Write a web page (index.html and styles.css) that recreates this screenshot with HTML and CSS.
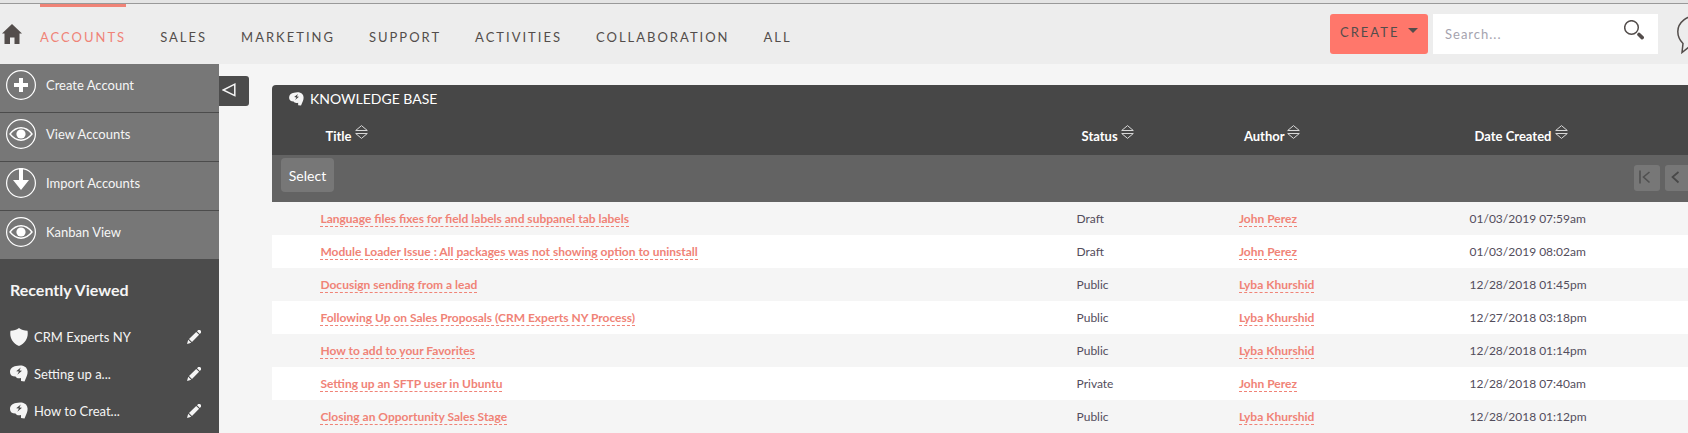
FILE: index.html
```html
<!DOCTYPE html>
<html lang="en">
<head>
<meta charset="UTF-8">
<title>Knowledge Base</title>
<link rel="stylesheet" href="styles.css">
</head>

<body>

<!-- shared icons -->
<svg class="sprite" aria-hidden="true">
 <symbol id="i-eye" viewBox="0 0 32 32">
  <circle cx="16" cy="16" r="14.4" fill="none" stroke="#fff" stroke-width="1.2"/>
  <path d="M5 16Q10 9.8 16 9.8T27 16Q22 22.2 16 22.2T5 16Z" fill="none" stroke="#fff" stroke-width="1.4"/>
  <circle cx="16" cy="16" r="4.6" fill="#fff"/>
 </symbol>
 <symbol id="i-brain" viewBox="0 0 18 17">
  <path d="M6 1C9 0 14 0 16 2.500C18 5 18 8 16.800 11L14.500 16.500L11 16V13C8 14 6 12.500 5.500 11.500C2 11.500 0 10 0 7C0 3.500 2.500 1.500 6 1Z" fill="#f5f5f5"/>
  <path d="M10.800 2.500L6.200 6.200L9 6.600L7.300 9.800L12 5.800L9.400 5.500Z" fill="#444"/>
 </symbol>
 <symbol id="i-pencil" viewBox="0 0 14 14">
  <path d="M0 14L1.200 9.800L4.200 12.700ZM2 9L9.200 1.900L12.100 4.700L5 12ZM10 1.200L11.200 0H13L14 1V2.700L12.800 3.900Z" fill="#f5f5f5"/>
 </symbol>
 <symbol id="i-sort" viewBox="0 0 13 14">
  <path d="M6.500 .6L12.300 5.500H.7ZM.7 8.500H12.300L6.500 13.400Z" fill="none" stroke="#d8d8d8" stroke-width="1"/>
 </symbol>
</svg>

<header class="topbar">
 <nav class="menu">
  <a class="home" href="#" aria-label="Home">
   <svg width="20" height="20" viewBox="0 0 20 20"><path d="M10 0L20 9.500H17.500V20H12.500V13.500H8V20H2.500V9.500H0Z" fill="#534d4b"/></svg>
  </a>
  <a class="active" href="#">ACCOUNTS</a>
  <a href="#">SALES</a>
  <a href="#">MARKETING</a>
  <a href="#">SUPPORT</a>
  <a href="#">ACTIVITIES</a>
  <a href="#">COLLABORATION</a>
  <a href="#">ALL</a>
 </nav>

 <div class="tools">
  <button class="create">CREATE <span class="caret"></span></button>
  <form class="search">
   <input type="text" placeholder="Search..." aria-label="Search">
   <button type="button" aria-label="Search">
    <svg width="20" height="20" viewBox="0 0 20 20"><circle cx="7.500" cy="7.500" r="6.800" fill="none" stroke="#534d4b" stroke-width="1.500"/><path d="M15 14.500L18.200 17.600" stroke="#534d4b" stroke-width="3.600" stroke-linecap="round"/></svg>
   </button>
  </form>
  <button class="chat" aria-label="Notifications">
   <svg width="44" height="40" viewBox="0 0 44 40"><path d="M6 29.500C2.500 26 .8 22 .8 17.500C.8 8.500 10 1 22 1S43 8.500 43 17.500S34 34 22 34C18.500 34 15.500 33.500 12.500 32.500L5 38.500Z" fill="none" stroke="#534d4b" stroke-width="1.500"/></svg>
  </button>
 </div>
</header>

<div class="page">
 <aside class="sidebar">
  <ul class="actions">
   <li><a href="#"><svg width="32" height="32" viewBox="0 0 32 32"><circle cx="16" cy="16" r="14.400" fill="none" stroke="#fff" stroke-width="1.200"/><path d="M16 9V23M9 16H23" stroke="#fff" stroke-width="4"/></svg>Create Account</a></li>
   <li><a href="#"><svg width="32" height="32"><use href="#i-eye"/></svg>View Accounts</a></li>
   <li><a href="#"><svg width="32" height="32" viewBox="0 0 32 32"><circle cx="16" cy="16" r="14.400" fill="none" stroke="#fff" stroke-width="1.200"/><path d="M14 1H18V13H24L16 23L8 13H14Z" fill="#fff"/></svg>Import Accounts</a></li>
   <li><a href="#"><svg width="32" height="32"><use href="#i-eye"/></svg>Kanban View</a></li>
  </ul>

  <h2>Recently Viewed</h2>
  <ul class="recent">
   <li>
    <a href="#"><svg width="18" height="18" viewBox="0 0 18 18"><path d="M9 0C11.500 1.800 14 2.600 17.500 2.800C18.600 9 16 15 9 18C2 15-.6 9 .5 2.800C4 2.600 6.500 1.800 9 0Z" fill="#f5f5f5"/></svg>CRM Experts NY</a>
    <a href="#" aria-label="Edit"><svg width="14" height="14"><use href="#i-pencil"/></svg></a>
   </li>
   <li>
    <a href="#"><svg width="18" height="17"><use href="#i-brain"/></svg>Setting up a...</a>
    <a href="#" aria-label="Edit"><svg width="14" height="14"><use href="#i-pencil"/></svg></a>
   </li>
   <li>
    <a href="#"><svg width="18" height="17"><use href="#i-brain"/></svg>How to Creat...</a>
    <a href="#" aria-label="Edit"><svg width="14" height="14"><use href="#i-pencil"/></svg></a>
   </li>
  </ul>
 </aside>

 <button class="toggle" aria-label="Collapse sidebar">
  <svg width="14" height="14" viewBox="0 0 14 14"><path d="M12.800 1.200V12.600L1.200 7Z" fill="none" stroke="#f5f5f5" stroke-width="1.500"/></svg>
 </button>

 <main class="panel">
  <h1><svg width="15" height="14" viewBox="0 0 18 17"><use href="#i-brain"/></svg>KNOWLEDGE BASE</h1>

  <table>
   <colgroup>
    <col class="c-check"><col class="c-title"><col class="c-status"><col class="c-author"><col>
   </colgroup>
   <thead>
    <tr>
     <th></th>
     <th>Title <svg width="13" height="14"><use href="#i-sort"/></svg></th>
     <th>Status <svg width="13" height="14"><use href="#i-sort"/></svg></th>
     <th>Author <svg width="13" height="14"><use href="#i-sort"/></svg></th>
     <th>Date Created <svg width="13" height="14"><use href="#i-sort"/></svg></th>
    </tr>
    <tr class="bar">
     <td colspan="5">
      <div class="bar-in">
       <button class="select">Select</button>
       <div class="pages">
        <button disabled aria-label="First page"><svg width="12" height="14" viewBox="0 0 12 14"><path d="M1 .5V13.500M10.500 2L4.500 7L10.500 12.500" fill="none" stroke="#505050" stroke-width="1.600"/></svg></button>
        <button disabled aria-label="Previous page"><svg width="12" height="14" viewBox="0 0 12 14"><path d="M8.500 2L2.500 7L8.500 12.500" fill="none" stroke="#484848" stroke-width="1.700"/></svg></button>
       </div>
      </div>
     </td>
    </tr>
   </thead>
   <tbody>
    <tr><td></td><td><a href="#">Language files fixes for field labels and subpanel tab labels</a></td><td>Draft</td><td><a href="#">John Perez</a></td><td>01/03/2019 07:59am</td></tr>
    <tr><td></td><td><a href="#">Module Loader Issue : All packages was not showing option to uninstall</a></td><td>Draft</td><td><a href="#">John Perez</a></td><td>01/03/2019 08:02am</td></tr>
    <tr><td></td><td><a href="#">Docusign sending from a lead</a></td><td>Public</td><td><a href="#">Lyba Khurshid</a></td><td>12/28/2018 01:45pm</td></tr>
    <tr><td></td><td><a href="#">Following Up on Sales Proposals (CRM Experts NY Process)</a></td><td>Public</td><td><a href="#">Lyba Khurshid</a></td><td>12/27/2018 03:18pm</td></tr>
    <tr><td></td><td><a href="#">How to add to your Favorites</a></td><td>Public</td><td><a href="#">Lyba Khurshid</a></td><td>12/28/2018 01:14pm</td></tr>
    <tr><td></td><td><a href="#">Setting up an SFTP user in Ubuntu</a></td><td>Private</td><td><a href="#">John Perez</a></td><td>12/28/2018 07:40am</td></tr>
    <tr><td></td><td><a href="#">Closing an Opportunity Sales Stage</a></td><td>Public</td><td><a href="#">Lyba Khurshid</a></td><td>12/28/2018 01:12pm</td></tr>
   </tbody>
  </table>
 </main>
</div>

</body>
</html>
```
FILE: styles.css
```css
*{
 box-sizing:border-box;
}

body{
 margin:0;
 min-height:100vh;
 display:flex;
 flex-direction:column;
 background:#f5f5f5;
 color:#534d5c;
 font-family:Lato, sans-serif;
 font-size:13px;
 overflow:hidden;
}

a{
 color:inherit;
 text-decoration:none;
}

button{
 border:0;
 padding:0;
 font:inherit;
 cursor:pointer;
}

svg{
 display:block;
 flex-shrink:0;
}

ul{
 margin:0;
 padding:0;
 list-style:none;
}

.sprite{
 position:absolute;
 width:0;
 height:0;
}

/* TOP BAR */
.topbar{
 display:flex;
 justify-content:space-between;
 height:64px;
 background:linear-gradient(#e4e4e4 3px, #999 3px, #999 4px, #ededed 4px);
 padding-top:4px;
 color:#534d4b;
}

.menu{
 display:flex;
 gap:34px;
 letter-spacing:2px;
 line-height:20px;
}

.menu a{
 border-top:3px solid transparent;
 padding-top:20px;
}

.menu .active{
 color:#f08377;
 border-color:#f08377;
}

.menu .home{
 padding:17px 0 0 2px;
 margin-right:-16px;
}

.tools{
 display:flex;
 padding-top:10px;
 margin-right:-33px;
}

.create{
 display:flex;
 align-items:center;
 justify-content:space-between;
 width:98px;
 height:40px;
 padding:0 10px 4px;
 margin-right:5px;
 border-radius:3px;
 background:#ff776b;
 color:#534d4b;
 letter-spacing:2px;
}

.caret{
 border:5px solid transparent;
 border-top-color:#534d4b;
 border-bottom:0;
 margin-bottom:4px;
}

.search{
 display:flex;
 align-items:center;
 width:225px;
 height:40px;
 margin-right:19px;
 padding:0 14px 0 12px;
 background:#fff;
}

.search input{
 flex:1;
 min-width:0;
 border:0;
 padding:0;
 outline:0;
 font:inherit;
 letter-spacing:1px;
}

.search input::placeholder{
 color:#a5a3ae;
}

.search button{
 background:none;
 padding-bottom:8px;
}

.chat{
 height:40px;
 background:none;
}

/* SIDEBAR */
.page{
 display:flex;
 align-items:flex-start;
 flex:1;
}

.sidebar{
 align-self:stretch;
 flex:0 0 219px;
 background:#4c4c4c;
 color:#f5f5f5;
}

.actions li{
 background:#777;
 border-bottom:1px solid #4c4c4c;
}

.actions li:last-child{
 border-bottom:0;
}

.actions a{
 display:flex;
 align-items:center;
 gap:9px;
 height:48px;
 padding:0 5px 6px;
}

.sidebar h2{
 margin:0;
 padding:21px 10px 18px;
 font-size:16px;
 line-height:20px;
}

.recent li{
 display:flex;
 align-items:center;
 justify-content:space-between;
 height:37px;
 padding:0 18px 0 10px;
}

.recent a{
 display:flex;
 align-items:center;
 gap:6px;
}

.toggle{
 flex:0 0 30px;
 height:30px;
 margin-top:12px;
 padding:0 0 2px 3px;
 border-radius:0 3px 3px 0;
 background:#4c4c4c;
}

/* LIST */
.panel{
 flex:1;
 margin:21px -8px 0 23px;
 border-radius:4px 0 0 0;
 background:#474747;
}

.panel h1{
 display:flex;
 align-items:center;
 gap:6px;
 margin:0;
 padding:0 17px;
 font-size:14px;
 font-weight:normal;
 line-height:28px;
 color:#fff;
}

table{
 width:100%;
 table-layout:fixed;
 border-collapse:collapse;
 font-size:12px;
}

.c-check{width:3.4%;}
.c-title{width:53.1%;}
.c-status{width:11.4%;}
.c-author{width:16.2%;}

th{
 height:42px;
 padding:0 5px;
 text-align:left;
 font-size:13px;
 color:#fff;
}

th svg{
 display:inline-block;
 vertical-align:2px;
}

td{
 height:33px;
 padding:0;
}

tbody tr{
 background:#fff;
}

tbody tr:nth-child(odd){
 background:#f5f5f5;
}

tbody a{
 color:#f08377;
 font-weight:bold;
 border-bottom:1px dashed #f08377;
}

.bar{
 background:#636363;
}

.bar-in{
 display:flex;
 justify-content:space-between;
 height:47px;
 padding:3px 5px 0 9px;
}

.select{
 width:53px;
 height:34px;
 border-radius:4px;
 background:#777;
 color:#fff;
 font-size:14px;
}

.pages{
 display:flex;
 gap:5px;
 padding-top:7px;
}

.pages button{
 width:26px;
 height:26px;
 padding:0 0 3px 5px;
 border-radius:3px;
 background:#777;
}
```
